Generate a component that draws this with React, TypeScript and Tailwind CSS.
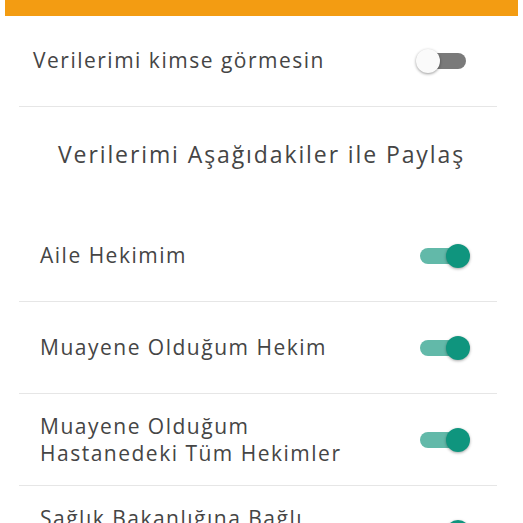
function Toggle({ on }: { on: boolean }) {
  return (
    <div className="relative w-[52px] h-[24px] flex items-center">
      <div
        className={
          on
            ? "w-[48px] h-[16px] ml-[2px] rounded-full bg-[#62b9a9]"
            : "w-[48px] h-[16px] ml-[2px] rounded-full bg-[#7a7a7a]"
        }
      />
      <div
        className={
          on
            ? "absolute right-0 top-0 w-[24px] h-[24px] rounded-full bg-[#0f957e] shadow-[0_1px_3px_rgba(0,0,0,0.35)]"
            : "absolute left-0 top-0 w-[24px] h-[24px] rounded-full bg-[#fafafa] shadow-[0_1px_3px_rgba(0,0,0,0.4)]"
        }
      />
    </div>
  );
}

function Row({ label, on }: { label: string[]; on: boolean }) {
  return (
    <div className="h-[92px] ml-[19px] mr-[26px] border-b border-[#e6e6e6] flex items-center justify-between pl-[21px] pr-[27px]">
      <div className="text-[21px] leading-[27px] tracking-[1.5px] text-[#454545]">
        {label.map((l) => (
          <div key={l}>{l}</div>
        ))}
      </div>
      <Toggle on={on} />
    </div>
  );
}

export default function App() {
  return (
    <div className="w-[523px] h-[523px] overflow-hidden bg-white font-['Open_Sans',sans-serif]">
      <div className="mx-[5px] h-[16px] bg-[#f39c12]" />
      <div className="h-[91px] ml-[19px] mr-[26px] border-b border-[#e6e6e6] flex items-center justify-between pl-[14px] pr-[29px]">
        <span className="text-[21px] tracking-[1.5px] text-[#454545]">Verilerimi kimse görmesin</span>
        <Toggle on={false} />
      </div>
      <div className="h-[103px] pt-[30px] text-center text-[23px] tracking-[1.9px] text-[#454545]">
        Verilerimi Aşağıdakiler ile Paylaş
      </div>
      <Row label={["Aile Hekimim"]} on />
      <Row label={["Muayene Olduğum Hekim"]} on />
      <Row label={["Muayene Olduğum", "Hastanedeki Tüm Hekimler"]} on />
      <Row label={["Sağlık Bakanlığına Bağlı", "Tüm Hekimler"]} on />
    </div>
  );
}
